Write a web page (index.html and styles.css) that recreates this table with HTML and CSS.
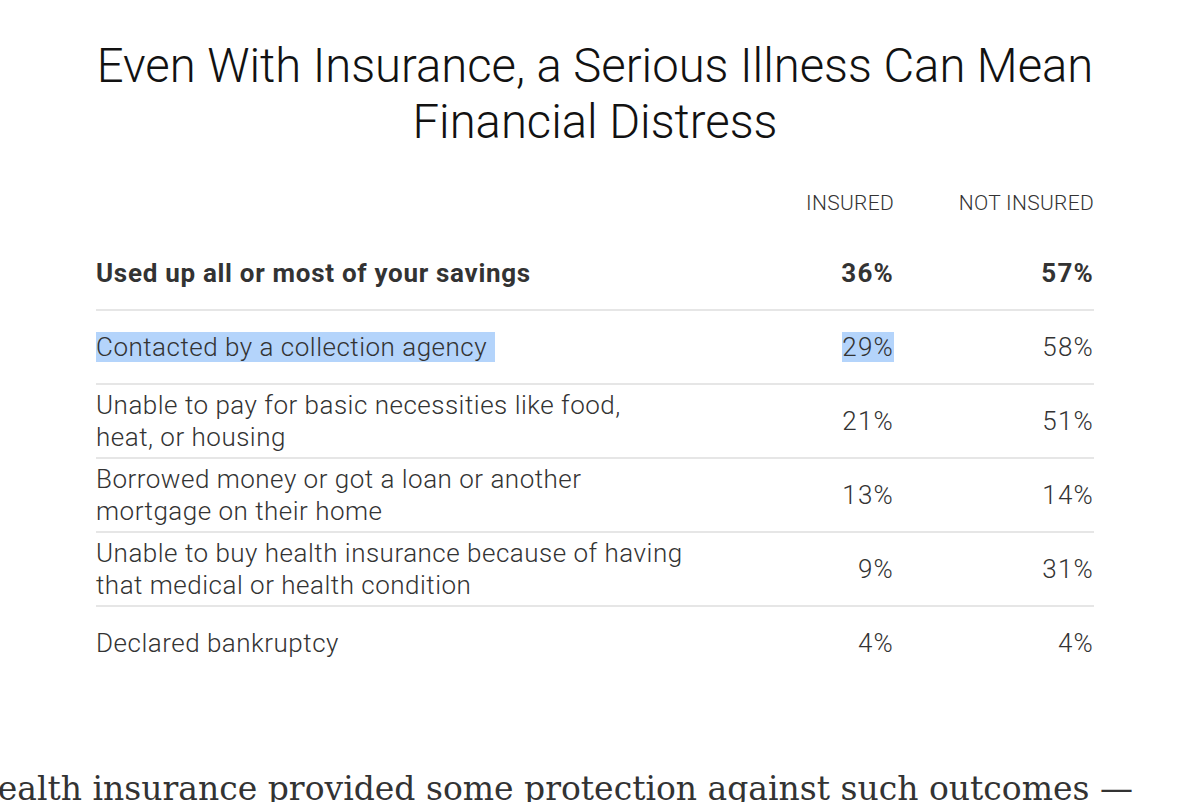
FILE: index.html
```html
<!DOCTYPE html>
<html>
<head>
<meta charset="utf-8">
<link rel="stylesheet" href="styles.css">
</head>
<body>
<div class="page">
  <section class="graphic">
    <h1 class="title">Even With Insurance, a Serious Illness Can Mean Financial Distress</h1>
    <div class="table">
      <div class="row head">
        <div class="label"></div>
        <div class="num">INSURED</div>
        <div class="num">NOT INSURED</div>
      </div>
      <div class="row bold">
        <div class="label">Used up all or most of your savings</div>
        <div class="num">36%</div>
        <div class="num">57%</div>
      </div>
      <div class="row">
        <div class="label"><span class="sel sel-wide">Contacted by a collection agency</span></div>
        <div class="num"><span class="sel">29%</span></div>
        <div class="num">58%</div>
      </div>
      <div class="row">
        <div class="label">Unable to pay for basic necessities like food,<br>heat, or housing</div>
        <div class="num">21%</div>
        <div class="num">51%</div>
      </div>
      <div class="row">
        <div class="label">Borrowed money or got a loan or another<br>mortgage on their home</div>
        <div class="num">13%</div>
        <div class="num">14%</div>
      </div>
      <div class="row">
        <div class="label">Unable to buy health insurance because of having<br>that medical or health condition</div>
        <div class="num">9%</div>
        <div class="num">31%</div>
      </div>
      <div class="row last">
        <div class="label">Declared bankruptcy</div>
        <div class="num">4%</div>
        <div class="num">4%</div>
      </div>
    </div>
  </section>
  <p class="body-text">Health insurance provided some protection against such outcomes —</p>
</div>
</body>
</html>
```

FILE: styles.css
```css
html, body {
  margin: 0;
  padding: 0;
  background: #fff;
  overflow: hidden;
}
.page {
  width: 1192px;
  height: 802px;
  overflow: hidden;
}
.graphic {
  width: 998px;
  margin: 0 0 0 96px;
  font-family: Roboto, "Liberation Sans", sans-serif;
  color: #333;
}
.title {
  margin: 38px 0 0 0;
  font-weight: 300;
  font-size: 47.2px;
  line-height: 56px;
  text-align: center;
  color: #121212;
}
.table {
  margin-top: 33px;
}
.row {
  display: grid;
  grid-template-columns: 1fr 200px 200px;
  align-items: center;
  height: 72px;
  border-bottom: 2px solid #e6e6e6;
  font-size: 26px;
  line-height: 32px;
  font-weight: 300;
  letter-spacing: 0.5px;
}
.row.head {
  height: 40px;
  border-bottom: none;
  font-size: 21px;
  line-height: 24px;
  letter-spacing: 0.3px;
  margin-bottom: 14px;
}
.row.bold {
  font-weight: 700;
  letter-spacing: 0.7px;
}
.row.last {
  border-bottom: none;
}
.label {
  white-space: nowrap;
}
.num {
  text-align: right;
}
.num {
  letter-spacing: 1.2px;
}
.row.head .num {
  letter-spacing: 0.3px;
}
.sel {
  background: #b4d4fb;
}
.sel-wide {
  padding-right: 8px;
}
.body-text {
  margin: 90px 0 0 -31px;
  white-space: nowrap;
  font-family: "DejaVu Serif", Georgia, serif;
  font-size: 33px;
  line-height: 40px;
  color: #333;
}
```
